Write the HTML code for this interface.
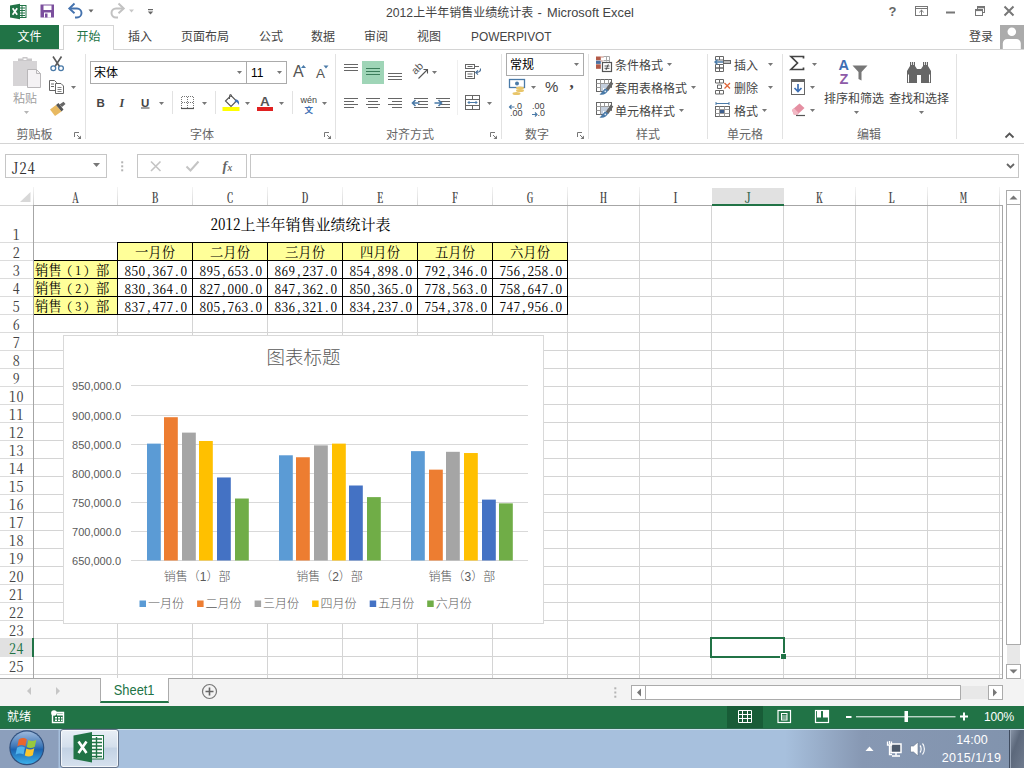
<!DOCTYPE html>
<html lang="zh-CN">
<head>
<meta charset="utf-8">
<title>2012上半年销售业绩统计表 - Microsoft Excel</title>
<style>
*{box-sizing:border-box;margin:0;padding:0}
html,body{width:1024px;height:768px;overflow:hidden;background:#fff}
body{position:relative;font-family:"Liberation Sans","Noto Sans CJK SC",sans-serif;font-size:12px;color:#444}
.abs{position:absolute}
#titlebar{position:absolute;left:0;top:0;width:1024px;height:24px;background:#fff}
#title{position:absolute;left:386px;top:3px;white-space:pre;font-size:12px;color:#444;line-height:20px}
.t1{font-size:12.2px}.t3{font-size:13px;letter-spacing:0.8px}.t4{font-size:12.8px}
#tabs{position:absolute;left:0;top:24px;width:1024px;height:26px;background:#fff;border-bottom:1px solid #d4d4d4}
.tab{position:absolute;top:1px;height:25px;line-height:25px;font-size:12px;color:#444;text-align:center;white-space:nowrap}
#tab-file{left:0;width:59px;top:1px;height:24px;line-height:25px;background:#217346;color:#fff}
#tab-home{left:63px;width:51px;top:1px;height:25px;border:1px solid #d4d4d4;border-bottom:0;background:#fff;color:#217346;line-height:23px}
#ribbon{position:absolute;left:0;top:50px;width:1024px;height:94px;background:#fff;border-bottom:1px solid #d4d4d4}
.glabel{position:absolute;top:75px;font-size:12px;color:#666;white-space:nowrap;transform:translateX(-50%)}
.gsep{position:absolute;top:6px;height:83px;width:1px;background:#e1e1e1}
.rtxt{position:absolute;font-size:12px;line-height:16px;color:#444;white-space:nowrap}
.combo{position:absolute;border:1px solid #ababab;background:#fff;height:23px;font-size:12px;color:#000;line-height:23px;padding-left:3px}
.dd{position:absolute;width:0;height:0;border-left:3px solid transparent;border-right:3px solid transparent;border-top:3px solid #777}
#fbar{position:absolute;left:0;top:144px;width:1024px;height:42px;background:#fff}
.fbox{position:absolute;border:1px solid #c6c6c6;background:#fff;top:10px;height:24px}
#grid{position:absolute;left:0;top:186px;width:1003px;height:493px;background:#fff;overflow:hidden}
.colh{position:absolute;height:15px;font-family:"Noto Serif CJK SC",serif;font-feature-settings:"hwid";font-size:14px;line-height:15px;color:#444;text-align:center}
.rowh{position:absolute;left:0;width:33px;height:18px;font-family:"Noto Serif CJK SC",serif;font-feature-settings:"hwid";font-size:14px;line-height:18px;color:#444;text-align:center;letter-spacing:.4px}
.vl{position:absolute;width:1px;background:#d4d4d4}
.hl{position:absolute;height:1px;background:#d4d4d4}
.cell{position:absolute;height:19px;border:1px solid #000;font-family:"Noto Serif CJK SC",serif;font-feature-settings:"hwid";font-size:14px;color:#000;white-space:nowrap;overflow:hidden}
.hd{background:#ffff99;text-align:center;line-height:17px;font-size:13.3px}
.nm{text-align:left;padding-left:1px}
.nm i{font-style:normal;display:inline-block}
.p1{margin-left:5px;font-size:11.5px}.p2{margin-left:3px;font-size:12px}.p3{margin-left:2.5px;font-size:11.5px}.p4{margin-left:6.5px}
.num{background:#fff;text-align:right;line-height:19px;padding-right:4.5px;font-size:13.3px;letter-spacing:.35px}
#sheetbar{position:absolute;left:0;top:679px;width:1024px;height:27px;background:#f3f3f3}
#status{position:absolute;left:0;top:706px;width:1024px;height:22px;background:#217346;color:#fff}
#taskbar{position:absolute;left:0;top:728px;width:1024px;height:40px;background:#a8c0dc}
</style>
</head>
<body>
<div id="titlebar"><div id="title"><span class="t1">2012</span><span class="t2">上半年销售业绩统计表</span><span class="t3"> - </span><span class="t4">Microsoft Excel</span></div>
<svg class="abs" style="left:0;top:0" width="170" height="24" viewBox="0 0 170 24">
<!-- excel icon -->
<rect x="17" y="5.5" width="9" height="12" fill="#fff" stroke="#217346" stroke-width="1"/>
<path d="M19 8h6M19 10.5h6M19 13h6M19 15.5h6M22 6v11" stroke="#217346" stroke-width="1" fill="none"/>
<path d="M10 5.5L20 3.8V19.2L10 17.5Z" fill="#217346"/>
<path d="M12.6 8.2L17.2 14.8M17.2 8.2L12.6 14.8" stroke="#fff" stroke-width="1.7" fill="none"/>
<!-- save -->
<path d="M40.500 4.500H54V17.500H40.500Z" fill="#7b4f9d"/>
<rect x="43.500" y="5.500" width="8" height="4.500" fill="#fff"/>
<rect x="44" y="12.500" width="7" height="5" fill="#fff"/>
<rect x="45" y="13.500" width="2.500" height="4" fill="#7b4f9d"/>
<!-- undo -->
<path d="M70.5 8.5H77a4.5 4.5 0 0 1 0 9h-2" stroke="#4472ae" stroke-width="1.900" fill="none"/>
<path d="M74.5 3.5L69.3 8.5L74.5 13.2" stroke="#4472ae" stroke-width="1.900" fill="none"/>
<path d="M88.5 9.5h5l-2.5 3z" fill="#666"/>
<!-- redo -->
<path d="M122.5 8.5H116a4.5 4.5 0 0 0 0 9h2" stroke="#c2c2c2" stroke-width="2" fill="none"/>
<path d="M118.5 3.5L123.7 8.5L118.5 13.2" stroke="#c2c2c2" stroke-width="2" fill="none"/>
<path d="M129 9.5h5l-2.5 3z" fill="#c8c8c8"/>
<!-- customize -->
<rect x="148" y="9" width="5" height="1.2" fill="#666"/>
<path d="M147.8 11.5h5.4l-2.7 3z" fill="#666"/>
</svg>
<svg class="abs" style="left:880px;top:0" width="144" height="24" viewBox="880 0 144 24">
<text x="888.5" y="15.5" font-family="Liberation Sans,sans-serif" font-weight="bold" font-size="13" fill="#666">?</text>
<rect x="915.5" y="6.5" width="12" height="9" fill="none" stroke="#777" stroke-width="1"/>
<path d="M915.5 8.5h12" stroke="#777" stroke-width="1"/>
<path d="M921.5 10v5M919.3 12.3L921.5 10.2L923.7 12.3" stroke="#777" stroke-width="1" fill="none"/>
<rect x="946" y="11.5" width="9" height="2" fill="#777"/>
<rect x="977.5" y="6.5" width="7" height="6" fill="none" stroke="#777" stroke-width="1"/>
<path d="M977 7.5h8" stroke="#777" stroke-width="1.6"/>
<rect x="975.5" y="9.5" width="7" height="6" fill="#fff" stroke="#777" stroke-width="1"/>
<path d="M975 10.3h8" stroke="#777" stroke-width="1.6"/>
<path d="M1004.5 6.5L1013.5 15.5M1013.5 6.5L1004.5 15.5" stroke="#777" stroke-width="2"/>
</svg>
</div>
<div id="tabs">
<div class="tab" id="tab-file">文件</div>
<div class="tab" id="tab-home">开始</div>
<div class="tab" style="left:128px">插入</div>
<div class="tab" style="left:181px">页面布局</div>
<div class="tab" style="left:259px">公式</div>
<div class="tab" style="left:311px">数据</div>
<div class="tab" style="left:364px">审阅</div>
<div class="tab" style="left:417px">视图</div>
<div class="tab" style="left:471px;font-size:11.9px">POWERPIVOT</div>
<div class="tab" style="left:969px">登录</div>
<svg class="abs" style="left:1000px;top:1px" width="24" height="24" viewBox="0 0 24 24"><rect width="24" height="24" fill="#ababab"/><circle cx="11.8" cy="6.800" r="4.300" fill="#fff"/><path d="M2.800 24v-5.500a4.500 4.500 0 0 1 4.500-4.500h9a4.500 4.500 0 0 1 4.500 4.500V24z" fill="#fff"/></svg>
</div>
<div id="ribbon">
<svg class="abs" style="left:0;top:0;z-index:3" width="1024" height="93" viewBox="0 50 1024 93">
<rect x="85.0" y="54" width="1" height="85" fill="#e2e2e2"/>
<rect x="335.0" y="54" width="1" height="85" fill="#e2e2e2"/>
<rect x="501.0" y="54" width="1" height="85" fill="#e2e2e2"/>
<rect x="588.0" y="54" width="1" height="85" fill="#e2e2e2"/>
<rect x="707.0" y="54" width="1" height="85" fill="#e2e2e2"/>
<rect x="782.0" y="54" width="1" height="85" fill="#e2e2e2"/>
<rect x="956.0" y="54" width="1" height="85" fill="#e2e2e2"/>
<rect x="172.0" y="91" width="1" height="23" fill="#e2e2e2"/>
<rect x="215.0" y="91" width="1" height="23" fill="#e2e2e2"/>
<rect x="292.0" y="91" width="1" height="23" fill="#e2e2e2"/>
<rect x="457" y="60" width="1" height="55" fill="#efefef"/>
<rect x="13" y="61" width="24" height="25" fill="#d6d4d6"/>
<path d="M18 61v-2.5h4.5v-1.5h5v1.5h4.5V61z" fill="#c9c7c9"/><rect x="23.5" y="58.5" width="3" height="1.5" fill="#fff"/>
<path d="M27.5 69.5h9l4 4V87.5h-13z" fill="#f4f2f4" stroke="#b9b7b9"/><path d="M36.5 69.5v4h4" fill="none" stroke="#b9b7b9"/>
<path d="M24.0 111h5l-2.5 3z" fill="#b5b5b5"/>
<path d="M53 56.5L59.5 66.5M61.5 56.5L55 66.5" stroke="#5a5a5a" stroke-width="1.6" fill="none"/>
<circle cx="53.3" cy="68.3" r="2.4" fill="none" stroke="#4a7aa8" stroke-width="1.3"/><circle cx="61" cy="68.3" r="2.4" fill="none" stroke="#4a7aa8" stroke-width="1.3"/>
<path d="M49.5 80.5h5l2 2v8h-7z" fill="#fff" stroke="#666"/><path d="M51 84h3M51 86.5h3" stroke="#666"/>
<path d="M55.5 83.5h5.5l2.500 2.500V93.500h-8z" fill="#fff" stroke="#666"/><path d="M57.500 87.500h4M57.500 89.500h4M57.500 91.500h4" stroke="#777" stroke-width="0.9"/>
<path d="M71.0 86h5l-2.5 3z" fill="#777"/>
<path d="M50 109.500L56 105l5.500 6.500L55 116z" fill="#e8b961"/>
<path d="M56 105l2.500-2L63.500 109.500l-2 2z" fill="#555"/>
<path d="M59.500 104.500l4-2.800 2 2.300-3.500 3z" fill="#666"/>
<path d="M74.5 137V132.5H79" stroke="#777" fill="none"/><path d="M77 135L80.5 138.5" stroke="#777" fill="none"/><path d="M81 135.5V139H77.5z" fill="#777"/>
<path d="M237.0 71h5l-2.5 3z" fill="#777"/>
<path d="M277.0 71h5l-2.5 3z" fill="#777"/>
<path d="M159.0 102h5l-2.5 3z" fill="#777"/>
<path d="M202.0 102h5l-2.5 3z" fill="#777"/>
<path d="M245.0 102h5l-2.5 3z" fill="#777"/>
<path d="M279.0 102h5l-2.5 3z" fill="#777"/>
<path d="M322.0 102h5l-2.5 3z" fill="#777"/>
<rect x="141" y="107.500" width="8.500" height="1" fill="#444"/>
<path d="M181.500 96.500h12M181.500 102.500h12M181.500 96.500v11M187.500 96.500v11M193.500 96.500v11" stroke="#777" stroke-dasharray="1 1" fill="none" shape-rendering="crispEdges"/><path d="M181 108.500h13" stroke="#555" stroke-width="1.2"/>
<rect x="222.500" y="107" width="17" height="4" fill="#ffff00"/>
<path d="M225.500 101l5.500-5.500 5.500 5.500-5.500 5.500z" fill="#fff" stroke="#555" stroke-width="1.100"/>
<path d="M229.500 99v-3.500a1 1 0 0 1 2 0V97" fill="none" stroke="#555" stroke-width="1"/>
<path d="M235.500 99.500c2.500 0 4 1.500 3.500 5.500-1.500-2.500-2-3-4.500-3.500z" fill="#3d6fb4"/>
<rect x="257" y="107" width="16" height="4" fill="#e02020"/>
<path d="M301 68l2.500-3 2.500 3z" fill="#4a7aa8"/><path d="M323.500 65.500h5l-2.500 3z" fill="#4a7aa8"/>
<path d="M324.5 137V132.5H329" stroke="#777" fill="none"/><path d="M327 135L330.5 138.5" stroke="#777" fill="none"/><path d="M331 135.5V139H327.5z" fill="#777"/>
<rect x="362" y="61" width="22" height="23" fill="#9fd5b7"/>
<rect x="344" y="64.0" width="14" height="1" fill="#666"/><rect x="344" y="67.0" width="14" height="1" fill="#666"/><rect x="344" y="70.0" width="14" height="1" fill="#666"/>
<rect x="366" y="68.0" width="14" height="1" fill="#3b7d5a"/><rect x="366" y="71.0" width="14" height="1" fill="#3b7d5a"/><rect x="366" y="74.0" width="14" height="1" fill="#3b7d5a"/>
<rect x="388" y="73.0" width="14" height="1" fill="#666"/><rect x="388" y="76.0" width="14" height="1" fill="#666"/><rect x="388" y="79.0" width="14" height="1" fill="#666"/>
<rect x="344" y="98.0" width="14" height="1" fill="#666"/><rect x="344" y="101.0" width="10" height="1" fill="#666"/><rect x="344" y="104.0" width="14" height="1" fill="#666"/><rect x="344" y="107.0" width="10" height="1" fill="#666"/>
<rect x="366" y="98.0" width="14" height="1" fill="#666"/><rect x="368" y="101.0" width="10" height="1" fill="#666"/><rect x="366" y="104.0" width="14" height="1" fill="#666"/><rect x="368" y="107.0" width="10" height="1" fill="#666"/>
<rect x="388" y="98.0" width="14" height="1" fill="#666"/><rect x="392" y="101.0" width="10" height="1" fill="#666"/><rect x="388" y="104.0" width="14" height="1" fill="#666"/><rect x="392" y="107.0" width="10" height="1" fill="#666"/>
<text x="0" y="0" transform="translate(415.500,75) rotate(-45)" font-family="Liberation Sans,sans-serif" font-size="10.500" fill="#555">ab</text>
<path d="M418.500 78.500L427 70M423.500 69.500h4v4" stroke="#555" stroke-width="1.100" fill="none"/>
<path d="M432.0 71h5l-2.5 3z" fill="#777"/>
<rect x="414" y="98.0" width="14" height="1" fill="#666"/><rect x="418" y="101.0" width="10" height="1" fill="#666"/><rect x="418" y="104.0" width="10" height="1" fill="#666"/><rect x="414" y="107.0" width="14" height="1" fill="#666"/>
<path d="M412.500 103h7M415.500 100l-3 3 3 3" stroke="#4a7aa8" stroke-width="1.600" fill="none"/>
<rect x="436" y="98.0" width="14" height="1" fill="#666"/><rect x="440" y="101.0" width="10" height="1" fill="#666"/><rect x="440" y="104.0" width="10" height="1" fill="#666"/><rect x="436" y="107.0" width="14" height="1" fill="#666"/>
<path d="M434.500 103h7M438.500 100l3 3-3 3" stroke="#4a7aa8" stroke-width="1.600" fill="none"/>
<rect x="465.500" y="64.500" width="9" height="4" fill="#fff" stroke="#666"/><path d="M467.500 66.500h5M474.500 66.500h4.500" stroke="#666"/>
<rect x="465.500" y="71.500" width="9" height="7" fill="#fff" stroke="#666"/><path d="M467.500 74h5M467.500 76.500h5" stroke="#666"/>
<path d="M480.500 68.500c0.500 3-2 4-4.500 4M478 70.300l-2.300 2.200 2.300 2.200" stroke="#4a6f96" stroke-width="1.100" fill="none"/>
<rect x="465.500" y="95.500" width="14" height="14" fill="#fff" stroke="#666"/><path d="M465.500 99.500h14M465.500 105.500h14M472.500 95.500v4M472.500 105.500v4" stroke="#666"/><path d="M468 102.500h9M469.500 101l-1.500 1.500 1.500 1.500M475.500 101l1.500 1.500-1.500 1.500" stroke="#4a7aa8" fill="none" stroke-width="1"/>
<path d="M487.0 102h5l-2.5 3z" fill="#777"/>
<path d="M490.5 137V132.5H495" stroke="#777" fill="none"/><path d="M493 135L496.5 138.5" stroke="#777" fill="none"/><path d="M497 135.5V139H493.5z" fill="#777"/>
<path d="M574.0 63h5l-2.5 3z" fill="#777"/>
<path d="M531.0 86h5l-2.5 3z" fill="#777"/>
<path d="M577.5 137V132.5H582" stroke="#777" fill="none"/><path d="M580 135L583.5 138.5" stroke="#777" fill="none"/><path d="M584 135.5V139H580.5z" fill="#777"/>
<rect x="509.500" y="79.500" width="15" height="8" fill="#fff" stroke="#4a7aa8" stroke-width="1.300"/><circle cx="517" cy="83.500" r="2" fill="#4a7aa8"/>
<ellipse cx="520" cy="88" rx="4" ry="1.500" fill="#e8c56a"/><ellipse cx="520" cy="90.500" rx="4" ry="1.500" fill="#e8c56a"/><ellipse cx="516.500" cy="93.500" rx="4" ry="1.500" fill="#e8c56a"/>
<path d="M509.500 107h5M511.500 105l-2 2 2 2" stroke="#4a7aa8" stroke-width="1.200" fill="none"/>
<path d="M532 114.500h5M535 112.500l2 2-2 2" stroke="#4a7aa8" stroke-width="1.200" fill="none"/>
<rect x="596" y="56.500" width="4.800" height="3.800" fill="#b25a48"/><rect x="596" y="60.700" width="4.800" height="3.200" fill="#4a6fa0"/><rect x="596" y="64.300" width="4.800" height="4.500" fill="#b25a48"/>
<path d="M600.800 57h3M600.800 61h2" stroke="#c98a7d" stroke-width="1"/>
<path d="M603.500 56.500h6v6M606.500 56.500v5M603.500 60.500h6" stroke="#aaa" fill="none"/>
<rect x="602.500" y="62.500" width="9" height="9" fill="#fff" stroke="#555" stroke-width="1.200"/><path d="M604.500 66h5M604.500 68.300h5M608.300 64.300l-2.300 5.700" stroke="#444" stroke-width="0.900"/>
<rect x="596.500" y="79.5" width="15" height="12" fill="#fff" stroke="#666"/>
<path d="M596.500 83.5h15M596.500 87.5h15M600.500 79.5v12M604.500 79.5v12M608.500 79.5v4" stroke="#999" fill="none"/>
<rect x="601" y="84" width="7" height="7" fill="#c3cedd"/>
<rect x="603" y="88" width="10" height="5" fill="#fff"/>
<path d="M612 82.5L607 90" stroke="#666" stroke-width="3.200" fill="none"/>
<path d="M608.300 90.3L605 88.3C602.500 91 601.500 93 599.500 94.5C603.500 95.5 607 93.5 608.300 90.3z" fill="#4a7aa8"/>
<circle cx="605.300" cy="91.3" r="0.900" fill="#dfe8f2"/>
<rect x="596.500" y="102.5" width="15" height="12" fill="#fff" stroke="#666"/>
<path d="M596.500 106.5h15M596.500 110.5h15M600.500 102.5v12M604.500 102.5v12M608.500 102.5v4" stroke="#999" fill="none"/>
<rect x="601" y="107" width="7" height="7" fill="#c3cedd"/>
<rect x="603" y="111" width="10" height="5" fill="#fff"/>
<path d="M612 105.5L607 113" stroke="#666" stroke-width="3.200" fill="none"/>
<path d="M608.300 113.3L605 111.3C602.500 114 601.500 116 599.500 117.5C603.500 118.5 607 116.5 608.300 113.3z" fill="#4a7aa8"/>
<circle cx="605.300" cy="114.3" r="0.900" fill="#dfe8f2"/>
<path d="M667.0 63h5l-2.5 3z" fill="#777"/>
<path d="M691.0 86h5l-2.5 3z" fill="#777"/>
<path d="M679.0 109h5l-2.5 3z" fill="#777"/>
<path d="M715.500 56.500h4v3.500h-4zM719.500 56.500h4v3.500h-4zM715.500 64.500h4v3.500h-4zM719.500 64.500h4v3.500h-4zM715.500 68h4v3.500h-4zM719.500 68h4v3.500h-4z" fill="#fff" stroke="#666"/>
<rect x="723.500" y="60.500" width="7" height="3" fill="#bbb" stroke="#666"/><path d="M715 62h8M717.500 59.500l-2.500 2.500 2.500 2.500" stroke="#4a7aa8" stroke-width="1.400" fill="none"/>
<path d="M715.500 79.500h4v3.500h-4zM719.500 79.500h4v3.500h-4zM717.500 85h4v3.500h-4zM715.500 90.500h4v3.500h-4zM719.500 90.500h4v3.500h-4z" fill="#fff" stroke="#666"/>
<path d="M724.500 83l5.500 5.500M730 83l-5.500 5.500" stroke="#e0663a" stroke-width="1.300"/>
<path d="M716 103.500h13M716 102v3M729 102v3" stroke="#4a7aa8" fill="none"/>
<rect x="715.500" y="106.500" width="14" height="10" fill="#fff" stroke="#666"/><path d="M715.500 109.500h14M715.500 113.500h14M719.500 106.500v10M724.500 106.500v10" stroke="#999"/><rect x="720" y="110" width="4" height="3" fill="#3d5f8f"/>
<path d="M768.0 63h5l-2.5 3z" fill="#777"/>
<path d="M768.0 86h5l-2.5 3z" fill="#777"/>
<path d="M762.0 109h5l-2.5 3z" fill="#777"/>
<path d="M803.500 58.500v-2h-12.500l6.500 6.500-6.500 6.500h12.500v-2" fill="none" stroke="#444" stroke-width="1.700"/>
<path d="M812.0 63h5l-2.5 3z" fill="#777"/>
<path d="M810.0 86h5l-2.5 3z" fill="#777"/>
<path d="M810.0 109h5l-2.5 3z" fill="#777"/>
<rect x="791.500" y="79.500" width="13" height="15" fill="#fff" stroke="#666"/><rect x="791" y="79" width="14" height="3" fill="#666"/><path d="M798 84v7.500M794.500 88l3.500 3.500 3.500-3.500" stroke="#3d6fb4" stroke-width="1.700" fill="none"/>
<path d="M792 110l7.500-6.500 5 4.500-7.500 7h-3z" fill="#e58fa2"/><path d="M792 110l2-1.800 4.500 4.500-1.500 2.300h-3z" fill="#f2b8c4"/><path d="M796 115.500h9" stroke="#555" stroke-width="1.200"/>
<path d="M852.500 65.500h15l-6 6.500v8.500l-3-1.500v-7z" fill="#777"/>
<path d="M854.0 111h5l-2.5 3z" fill="#777"/>
<path d="M919.0 111h5l-2.5 3z" fill="#777"/>
<path d="M907 83V71l3-5v-4h5v4l2 3v14zM931 83V71l-3-5v-4h-5v4l-2 3v14z" fill="#666"/><rect x="916" y="69" width="6" height="6" fill="#666"/><path d="M908.500 82.500v-8M929.500 82.500v-8" stroke="#fff" stroke-width="1"/><path d="M911.500 62v3M913.500 62v3M924.500 62v3M926.500 62v3" stroke="#fff" stroke-width="0.800"/>
<path d="M1005.500 137.500l4-4 4 4" fill="none" stroke="#555" stroke-width="1.800"/>
</svg>
<div class="rtxt" style="left:13px;top:40.5px;color:#a0a0a0">粘贴</div>
<div class="glabel" style="left:34.5px">剪贴板</div>
<div class="glabel" style="left:202px">字体</div>
<div class="glabel" style="left:410px">对齐方式</div>
<div class="glabel" style="left:537px">数字</div>
<div class="glabel" style="left:648px">样式</div>
<div class="glabel" style="left:745px">单元格</div>
<div class="glabel" style="left:869px">编辑</div>
<div class="combo" style="left:90px;top:11px;width:157px">宋体</div>
<div class="combo" style="left:246px;top:11px;width:41px;padding-left:4px;font-family:'Liberation Sans',sans-serif">11</div>
<div class="combo" style="left:506px;top:3px;width:78px;height:23px;line-height:23px">常规</div>
<div class="rtxt" style="left:96.5px;top:44.5px;font-weight:bold;font-size:11.5px;font-family:'Liberation Sans',sans-serif">B</div>
<div class="rtxt" style="left:119.5px;top:44.5px;font-style:italic;font-weight:bold;font-size:12px;font-family:'Liberation Serif',serif">I</div>
<div class="rtxt" style="left:141px;top:44.5px;font-size:11.5px;font-weight:bold;font-family:'Liberation Sans',sans-serif">U</div>
<div class="rtxt" style="left:293px;top:14px;font-size:16px;font-family:'Liberation Sans',sans-serif;color:#555">A</div>
<div class="rtxt" style="left:316px;top:16px;font-size:13.5px;font-family:'Liberation Sans',sans-serif;color:#555">A</div>
<div class="rtxt" style="left:260px;top:43.5px;font-size:13.5px;font-weight:bold;font-family:'Liberation Sans',sans-serif;color:#555">A</div>
<div class="rtxt" style="left:300.5px;top:41.5px;font-size:9px;font-family:'Liberation Sans',sans-serif;color:#444">wén</div>
<div class="rtxt" style="left:304.5px;top:51.5px;font-size:8.500px;color:#3d6fb4;font-weight:bold">文</div>
<div class="rtxt" style="left:545px;top:29px;font-size:15px;font-family:'Liberation Sans',sans-serif;color:#444">%</div>
<div class="rtxt" style="left:569.5px;top:24.5px;font-size:17px;font-weight:bold;font-family:'Liberation Serif',serif;color:#444">,</div>
<div class="rtxt" style="left:514.5px;top:51.5px;font-size:9px;font-family:'Liberation Sans',sans-serif;line-height:8px">.0</div>
<div class="rtxt" style="left:510px;top:59px;font-size:9px;font-family:'Liberation Sans',sans-serif;line-height:8px">.00</div>
<div class="rtxt" style="left:532px;top:51.5px;font-size:9px;font-family:'Liberation Sans',sans-serif;line-height:8px">.00</div>
<div class="rtxt" style="left:537.5px;top:59px;font-size:9px;font-family:'Liberation Sans',sans-serif;line-height:8px">.0</div>
<div class="rtxt" style="left:615px;top:7.5px;">条件格式</div>
<div class="rtxt" style="left:615px;top:30.5px;">套用表格格式</div>
<div class="rtxt" style="left:615px;top:53.5px;">单元格样式</div>
<div class="rtxt" style="left:734px;top:7.5px;">插入</div>
<div class="rtxt" style="left:734px;top:30.5px;">删除</div>
<div class="rtxt" style="left:734px;top:53.5px;">格式</div>
<div class="rtxt" style="left:824px;top:40.5px;">排序和筛选</div>
<div class="rtxt" style="left:889px;top:40.5px;">查找和选择</div>
<div class="rtxt" style="left:838.5px;top:7.5px;font-weight:bold;font-size:14.5px;font-family:'Liberation Sans',sans-serif;color:#3d6fb4;line-height:14px">A</div>
<div class="rtxt" style="left:839.5px;top:21.5px;font-weight:bold;font-size:14.5px;font-family:'Liberation Sans',sans-serif;color:#8e5ba8;line-height:14px">Z</div>
</div>
<div id="fbar">
<div class="fbox" style="left:5px;width:102px;letter-spacing:.8px;font-family:'Noto Serif CJK SC',serif;font-feature-settings:'hwid';font-size:15px;line-height:25px;padding-left:5px;color:#333">J24</div>
<div class="fbox" style="left:137px;width:110px"></div>
<div class="fbox" style="left:250px;width:769px"></div>
<svg class="abs" style="left:0;top:0" width="1024" height="42" viewBox="0 144 1024 42">
<path d="M93 163h7l-3.500 4z" fill="#777"/>
<rect x="121.200" y="161.300" width="2" height="2" fill="#b4b4b4"/><rect x="121.200" y="165.300" width="2" height="2" fill="#b4b4b4"/><rect x="121.200" y="169.300" width="2" height="2" fill="#b4b4b4"/>
<path d="M151 161.500l9.500 9.500M160.500 161.500l-9.500 9.500" stroke="#c4c4c4" stroke-width="1.600"/>
<path d="M186.500 166.500l4 4 8-9" stroke="#c4c4c4" stroke-width="2" fill="none"/>
<text x="222.500" y="171" font-family="Liberation Serif,serif" font-style="italic" font-weight="bold" font-size="14" fill="#666">f</text><text x="227.500" y="171" font-family="Liberation Serif,serif" font-style="italic" font-weight="bold" font-size="9.500" fill="#666">x</text>
<path d="M1007 164l3.500 3.500 3.500-3.500" stroke="#666" stroke-width="1.800" fill="none"/>
</svg>
</div>
<div id="grid">
<div class="vl" style="left:117px;top:1px;height:18px;background:linear-gradient(180deg,#f4f4f4,#d8d8d8)"></div>
<div class="vl" style="left:192px;top:1px;height:18px;background:linear-gradient(180deg,#f4f4f4,#d8d8d8)"></div>
<div class="vl" style="left:267px;top:1px;height:18px;background:linear-gradient(180deg,#f4f4f4,#d8d8d8)"></div>
<div class="vl" style="left:342px;top:1px;height:18px;background:linear-gradient(180deg,#f4f4f4,#d8d8d8)"></div>
<div class="vl" style="left:417px;top:1px;height:18px;background:linear-gradient(180deg,#f4f4f4,#d8d8d8)"></div>
<div class="vl" style="left:492px;top:1px;height:18px;background:linear-gradient(180deg,#f4f4f4,#d8d8d8)"></div>
<div class="vl" style="left:567px;top:1px;height:18px;background:linear-gradient(180deg,#f4f4f4,#d8d8d8)"></div>
<div class="vl" style="left:639px;top:1px;height:18px;background:linear-gradient(180deg,#f4f4f4,#d8d8d8)"></div>
<div class="vl" style="left:855px;top:1px;height:18px;background:linear-gradient(180deg,#f4f4f4,#d8d8d8)"></div>
<div class="vl" style="left:927px;top:1px;height:18px;background:linear-gradient(180deg,#f4f4f4,#d8d8d8)"></div>
<div class="vl" style="left:999px;top:1px;height:18px;background:linear-gradient(180deg,#f4f4f4,#d8d8d8)"></div>
<div class="vl" style="left:33px;top:1px;height:18px;background:linear-gradient(180deg,#f4f4f4,#d0d0d0)"></div>
<svg class="abs" style="left:18px;top:4px" width="14" height="14" viewBox="18 190 14 14"><path d="M30.500 192v10H20z" fill="#d8d8d8"/></svg>
<div class="hl" style="left:34px;top:56px;width:968px"></div>
<div class="hl" style="left:0;top:56px;width:33px;background:#dcdcdc"></div>
<div class="hl" style="left:34px;top:74px;width:968px"></div>
<div class="hl" style="left:0;top:74px;width:33px;background:#dcdcdc"></div>
<div class="hl" style="left:34px;top:92px;width:968px"></div>
<div class="hl" style="left:0;top:92px;width:33px;background:#dcdcdc"></div>
<div class="hl" style="left:34px;top:110px;width:968px"></div>
<div class="hl" style="left:0;top:110px;width:33px;background:#dcdcdc"></div>
<div class="hl" style="left:34px;top:128px;width:968px"></div>
<div class="hl" style="left:0;top:128px;width:33px;background:#dcdcdc"></div>
<div class="hl" style="left:34px;top:146px;width:968px"></div>
<div class="hl" style="left:0;top:146px;width:33px;background:#dcdcdc"></div>
<div class="hl" style="left:34px;top:164px;width:968px"></div>
<div class="hl" style="left:0;top:164px;width:33px;background:#dcdcdc"></div>
<div class="hl" style="left:34px;top:182px;width:968px"></div>
<div class="hl" style="left:0;top:182px;width:33px;background:#dcdcdc"></div>
<div class="hl" style="left:34px;top:200px;width:968px"></div>
<div class="hl" style="left:0;top:200px;width:33px;background:#dcdcdc"></div>
<div class="hl" style="left:34px;top:218px;width:968px"></div>
<div class="hl" style="left:0;top:218px;width:33px;background:#dcdcdc"></div>
<div class="hl" style="left:34px;top:236px;width:968px"></div>
<div class="hl" style="left:0;top:236px;width:33px;background:#dcdcdc"></div>
<div class="hl" style="left:34px;top:254px;width:968px"></div>
<div class="hl" style="left:0;top:254px;width:33px;background:#dcdcdc"></div>
<div class="hl" style="left:34px;top:272px;width:968px"></div>
<div class="hl" style="left:0;top:272px;width:33px;background:#dcdcdc"></div>
<div class="hl" style="left:34px;top:290px;width:968px"></div>
<div class="hl" style="left:0;top:290px;width:33px;background:#dcdcdc"></div>
<div class="hl" style="left:34px;top:308px;width:968px"></div>
<div class="hl" style="left:0;top:308px;width:33px;background:#dcdcdc"></div>
<div class="hl" style="left:34px;top:326px;width:968px"></div>
<div class="hl" style="left:0;top:326px;width:33px;background:#dcdcdc"></div>
<div class="hl" style="left:34px;top:344px;width:968px"></div>
<div class="hl" style="left:0;top:344px;width:33px;background:#dcdcdc"></div>
<div class="hl" style="left:34px;top:362px;width:968px"></div>
<div class="hl" style="left:0;top:362px;width:33px;background:#dcdcdc"></div>
<div class="hl" style="left:34px;top:380px;width:968px"></div>
<div class="hl" style="left:0;top:380px;width:33px;background:#dcdcdc"></div>
<div class="hl" style="left:34px;top:398px;width:968px"></div>
<div class="hl" style="left:0;top:398px;width:33px;background:#dcdcdc"></div>
<div class="hl" style="left:34px;top:416px;width:968px"></div>
<div class="hl" style="left:0;top:416px;width:33px;background:#dcdcdc"></div>
<div class="hl" style="left:34px;top:434px;width:968px"></div>
<div class="hl" style="left:0;top:434px;width:33px;background:#dcdcdc"></div>
<div class="hl" style="left:34px;top:452px;width:968px"></div>
<div class="hl" style="left:0;top:452px;width:33px;background:#dcdcdc"></div>
<div class="hl" style="left:34px;top:470px;width:968px"></div>
<div class="hl" style="left:0;top:470px;width:33px;background:#dcdcdc"></div>
<div class="hl" style="left:34px;top:488px;width:968px"></div>
<div class="hl" style="left:0;top:488px;width:33px;background:#dcdcdc"></div>
<div class="vl" style="left:117px;top:20px;height:472px"></div>
<div class="vl" style="left:192px;top:20px;height:472px"></div>
<div class="vl" style="left:267px;top:20px;height:472px"></div>
<div class="vl" style="left:342px;top:20px;height:472px"></div>
<div class="vl" style="left:417px;top:20px;height:472px"></div>
<div class="vl" style="left:492px;top:20px;height:472px"></div>
<div class="vl" style="left:567px;top:20px;height:472px"></div>
<div class="vl" style="left:639px;top:20px;height:472px"></div>
<div class="vl" style="left:711px;top:20px;height:472px"></div>
<div class="vl" style="left:783px;top:20px;height:472px"></div>
<div class="vl" style="left:855px;top:20px;height:472px"></div>
<div class="vl" style="left:927px;top:20px;height:472px"></div>
<div class="vl" style="left:999px;top:20px;height:472px"></div>
<div class="hl" style="left:0;top:19px;width:33px;background:#d4d4d4"></div>
<div class="hl" style="left:33px;top:19px;width:970px;background:#a6a6a6"></div>
<div class="vl" style="left:33px;top:19px;height:474px;background:#a6a6a6"></div>
<div class="vl" style="left:1002px;top:19px;height:474px;background:#a6a6a6"></div>
<div class="hl" style="left:0px;top:492px;width:1003px;background:#a6a6a6"></div>
<div class="colh" style="left:34px;width:83px;top:4px;">A</div>
<div class="colh" style="left:118px;width:74px;top:4px;">B</div>
<div class="colh" style="left:193px;width:74px;top:4px;">C</div>
<div class="colh" style="left:268px;width:74px;top:4px;">D</div>
<div class="colh" style="left:343px;width:74px;top:4px;">E</div>
<div class="colh" style="left:418px;width:74px;top:4px;">F</div>
<div class="colh" style="left:493px;width:74px;top:4px;">G</div>
<div class="colh" style="left:568px;width:71px;top:4px;">H</div>
<div class="colh" style="left:640px;width:71px;top:4px;">I</div>
<div class="abs" style="left:712px;top:2px;width:72px;height:18px;background:#e1e1e1;border-bottom:2px solid #217346"></div>
<div class="colh" style="left:712px;width:71px;top:4px;color:#2b6048;">J</div>
<div class="colh" style="left:784px;width:71px;top:4px;">K</div>
<div class="colh" style="left:856px;width:71px;top:4px;">L</div>
<div class="colh" style="left:928px;width:71px;top:4px;">M</div>
<div class="rowh" style="top:20px;height:36px;line-height:57px">1</div>
<div class="rowh" style="top:57px;height:17px;line-height:19px">2</div>
<div class="rowh" style="top:75px;height:17px;line-height:19px">3</div>
<div class="rowh" style="top:93px;height:17px;line-height:19px">4</div>
<div class="rowh" style="top:111px;height:17px;line-height:19px">5</div>
<div class="rowh" style="top:129px;height:17px;line-height:19px">6</div>
<div class="rowh" style="top:147px;height:17px;line-height:19px">7</div>
<div class="rowh" style="top:165px;height:17px;line-height:19px">8</div>
<div class="rowh" style="top:183px;height:17px;line-height:19px">9</div>
<div class="rowh" style="top:201px;height:17px;line-height:19px">10</div>
<div class="rowh" style="top:219px;height:17px;line-height:19px">11</div>
<div class="rowh" style="top:237px;height:17px;line-height:19px">12</div>
<div class="rowh" style="top:255px;height:17px;line-height:19px">13</div>
<div class="rowh" style="top:273px;height:17px;line-height:19px">14</div>
<div class="rowh" style="top:291px;height:17px;line-height:19px">15</div>
<div class="rowh" style="top:309px;height:17px;line-height:19px">16</div>
<div class="rowh" style="top:327px;height:17px;line-height:19px">17</div>
<div class="rowh" style="top:345px;height:17px;line-height:19px">18</div>
<div class="rowh" style="top:363px;height:17px;line-height:19px">19</div>
<div class="rowh" style="top:381px;height:17px;line-height:19px">20</div>
<div class="rowh" style="top:399px;height:17px;line-height:19px">21</div>
<div class="rowh" style="top:417px;height:17px;line-height:19px">22</div>
<div class="rowh" style="top:435px;height:17px;line-height:19px">23</div>
<div class="abs" style="left:0;top:452px;width:34px;height:19px;background:#e1e1e1;border-right:2px solid #217346"></div>
<div class="rowh" style="top:453px;height:17px;line-height:19px;color:#217346">24</div>
<div class="rowh" style="top:471px;height:17px;line-height:19px">25</div>
<div class="abs" style="left:34px;top:20px;width:533px;height:36px;background:#fff;text-align:center;font-family:'Noto Serif CJK SC',serif;font-feature-settings:'hwid';font-size:15px;color:#000;line-height:36px;white-space:nowrap"><span class="ttl">2012上半年销售业绩统计表</span></div>
<div class="cell hd" style="left:117px;top:56px;width:76px">一月份</div>
<div class="cell hd" style="left:192px;top:56px;width:76px">二月份</div>
<div class="cell hd" style="left:267px;top:56px;width:76px">三月份</div>
<div class="cell hd" style="left:342px;top:56px;width:76px">四月份</div>
<div class="cell hd" style="left:417px;top:56px;width:76px">五月份</div>
<div class="cell hd" style="left:492px;top:56px;width:76px">六月份</div>
<div class="cell hd nm" style="left:34px;top:74px;width:84px;height:19px;border-left:0;border-right:0">销售<i class="p1">（</i><i class="p2">1</i><i class="p3">）</i><i class="p4">部</i></div>
<div class="cell num" style="left:117px;top:74px;width:76px">850,367.0</div>
<div class="cell num" style="left:192px;top:74px;width:76px">895,653.0</div>
<div class="cell num" style="left:267px;top:74px;width:76px">869,237.0</div>
<div class="cell num" style="left:342px;top:74px;width:76px">854,898.0</div>
<div class="cell num" style="left:417px;top:74px;width:76px">792,346.0</div>
<div class="cell num" style="left:492px;top:74px;width:76px">756,258.0</div>
<div class="cell hd nm" style="left:34px;top:92px;width:84px;height:19px;border-left:0;border-right:0">销售<i class="p1">（</i><i class="p2">2</i><i class="p3">）</i><i class="p4">部</i></div>
<div class="cell num" style="left:117px;top:92px;width:76px">830,364.0</div>
<div class="cell num" style="left:192px;top:92px;width:76px">827,000.0</div>
<div class="cell num" style="left:267px;top:92px;width:76px">847,362.0</div>
<div class="cell num" style="left:342px;top:92px;width:76px">850,365.0</div>
<div class="cell num" style="left:417px;top:92px;width:76px">778,563.0</div>
<div class="cell num" style="left:492px;top:92px;width:76px">758,647.0</div>
<div class="cell hd nm" style="left:34px;top:110px;width:84px;height:19px;border-left:0;border-right:0">销售<i class="p1">（</i><i class="p2">3</i><i class="p3">）</i><i class="p4">部</i></div>
<div class="cell num" style="left:117px;top:110px;width:76px">837,477.0</div>
<div class="cell num" style="left:192px;top:110px;width:76px">805,763.0</div>
<div class="cell num" style="left:267px;top:110px;width:76px">836,321.0</div>
<div class="cell num" style="left:342px;top:110px;width:76px">834,237.0</div>
<div class="cell num" style="left:417px;top:110px;width:76px">754,378.0</div>
<div class="cell num" style="left:492px;top:110px;width:76px">747,956.0</div>
<div class="abs" id="chart" style="left:63px;top:149px;width:481px;height:289px;background:#fff;border:1px solid #d9d9d9">
<svg class="abs" style="left:-1px;top:-1px" width="481" height="289" viewBox="63 335 481 289" font-family="Liberation Sans,Noto Sans CJK SC,sans-serif" font-weight="300">
<path d="M131 385.5H528" stroke="#d9d9d9" stroke-width="1"/>
<text x="121" y="389.5" font-size="11" fill="#595959" text-anchor="end">950,000.0</text>
<path d="M131 415.5H528" stroke="#d9d9d9" stroke-width="1"/>
<text x="121" y="419.5" font-size="11" fill="#595959" text-anchor="end">900,000.0</text>
<path d="M131 444.5H528" stroke="#d9d9d9" stroke-width="1"/>
<text x="121" y="448.5" font-size="11" fill="#595959" text-anchor="end">850,000.0</text>
<path d="M131 473.5H528" stroke="#d9d9d9" stroke-width="1"/>
<text x="121" y="477.5" font-size="11" fill="#595959" text-anchor="end">800,000.0</text>
<path d="M131 502.5H528" stroke="#d9d9d9" stroke-width="1"/>
<text x="121" y="506.5" font-size="11" fill="#595959" text-anchor="end">750,000.0</text>
<path d="M131 531.5H528" stroke="#d9d9d9" stroke-width="1"/>
<text x="121" y="535.5" font-size="11" fill="#595959" text-anchor="end">700,000.0</text>
<path d="M131 560.5H528" stroke="#d9d9d9" stroke-width="1"/>
<text x="121" y="564.5" font-size="11" fill="#595959" text-anchor="end">650,000.0</text>
<rect x="147.00" y="443.62" width="13.80" height="116.88" fill="#5b9bd5"/>
<rect x="164.00" y="417.20" width="13.80" height="143.30" fill="#ed7d31"/>
<rect x="182.00" y="432.61" width="13.80" height="127.89" fill="#a5a5a5"/>
<rect x="199.00" y="440.98" width="13.80" height="119.52" fill="#ffc000"/>
<rect x="217.00" y="477.46" width="13.80" height="83.04" fill="#4472c4"/>
<rect x="235.00" y="498.52" width="13.80" height="61.98" fill="#70ad47"/>
<text x="197.2" y="581" font-size="12" fill="#595959" text-anchor="middle">销售（1）部</text>
<rect x="279.00" y="455.29" width="13.80" height="105.21" fill="#5b9bd5"/>
<rect x="296.00" y="457.25" width="13.80" height="103.25" fill="#ed7d31"/>
<rect x="314.00" y="445.37" width="13.80" height="115.13" fill="#a5a5a5"/>
<rect x="332.00" y="443.62" width="13.80" height="116.88" fill="#ffc000"/>
<rect x="349.00" y="485.50" width="13.80" height="75.00" fill="#4472c4"/>
<rect x="367.00" y="497.12" width="13.80" height="63.38" fill="#70ad47"/>
<text x="329.5" y="581" font-size="12" fill="#595959" text-anchor="middle">销售（2）部</text>
<rect x="411.00" y="451.14" width="13.80" height="109.36" fill="#5b9bd5"/>
<rect x="429.00" y="469.64" width="13.80" height="90.86" fill="#ed7d31"/>
<rect x="446.00" y="451.81" width="13.80" height="108.69" fill="#a5a5a5"/>
<rect x="464.00" y="453.03" width="13.80" height="107.47" fill="#ffc000"/>
<rect x="482.00" y="499.61" width="13.80" height="60.89" fill="#4472c4"/>
<rect x="499.00" y="503.36" width="13.80" height="57.14" fill="#70ad47"/>
<text x="461.8" y="581" font-size="12" fill="#595959" text-anchor="middle">销售（3）部</text>
<text x="303.5" y="364" font-size="18.5" fill="#595959" text-anchor="middle">图表标题</text>
<rect x="139.5" y="600.5" width="6.500" height="6.500" fill="#5b9bd5"/>
<text x="148.0" y="608" font-size="12" fill="#595959">一月份</text>
<rect x="197.1" y="600.5" width="6.500" height="6.500" fill="#ed7d31"/>
<text x="205.6" y="608" font-size="12" fill="#595959">二月份</text>
<rect x="254.6" y="600.5" width="6.500" height="6.500" fill="#a5a5a5"/>
<text x="263.1" y="608" font-size="12" fill="#595959">三月份</text>
<rect x="312.1" y="600.5" width="6.500" height="6.500" fill="#ffc000"/>
<text x="320.6" y="608" font-size="12" fill="#595959">四月份</text>
<rect x="369.7" y="600.5" width="6.500" height="6.500" fill="#4472c4"/>
<text x="378.2" y="608" font-size="12" fill="#595959">五月份</text>
<rect x="427.2" y="600.5" width="6.500" height="6.500" fill="#70ad47"/>
<text x="435.8" y="608" font-size="12" fill="#595959">六月份</text>
</svg></div>
<div class="abs" style="left:710px;top:451px;width:75px;height:21px;border:2px solid #217346"></div>
<div class="abs" style="left:780px;top:467px;width:6px;height:6px;background:#217346;border:1px solid #fff;border-right:0;border-bottom:0"></div>
</div>
<svg class="abs" id="vscroll" style="left:1003px;top:190px" width="21" height="489" viewBox="1003 190 21 489">
<rect x="1006.500" y="190.500" width="14" height="14" fill="#fff" stroke="#ababab"/><path d="M1009.500 199.500h8l-4-4z" fill="#777"/>
<rect x="1006.500" y="204.500" width="14" height="440" fill="#fff" stroke="#ababab"/>
<rect x="1007" y="645" width="13" height="19" fill="#e8e8e8"/>
<rect x="1006.500" y="664.500" width="14" height="14" fill="#fff" stroke="#ababab"/><path d="M1009.500 669.500h8l-4 4z" fill="#777"/>
</svg>
<div id="sheetbar">
<div class="abs" style="left:100px;top:-1px;width:69px;height:25px;background:#fff;border-left:1px solid #ababab;border-right:1px solid #ababab;border-bottom:2px solid #217346;color:#217346;font-size:14.6px;text-align:center;line-height:25px;font-family:'Liberation Sans',sans-serif"><span style="display:inline-block;transform:scaleX(.88);transform-origin:50% 50%">Sheet1</span></div>
<svg class="abs" style="left:0;top:0" width="1024" height="27" viewBox="0 679 1024 27">
<path d="M31 687v8l-4-4zM56 687v8l4-4z" fill="#c6c6c6"/>
<circle cx="209.500" cy="691.500" r="7" fill="none" stroke="#777" stroke-width="1.200"/><path d="M205.500 691.500h8M209.500 687.500v8" stroke="#666" stroke-width="1.600"/>
<rect x="614.300" y="687.300" width="2" height="2" fill="#b4b4b4"/><rect x="614.300" y="691.500" width="2" height="2" fill="#b4b4b4"/><rect x="614.300" y="695.700" width="2" height="2" fill="#b4b4b4"/>
<rect x="631.500" y="685.500" width="14" height="14" fill="#fff" stroke="#ababab"/><path d="M641 688.500v8l-4-4z" fill="#777"/>
<rect x="645.500" y="685.500" width="315" height="14" fill="#fff" stroke="#ababab"/>
<rect x="961" y="686" width="27" height="13" fill="#e8e8e8"/>
<rect x="988.500" y="685.500" width="14" height="14" fill="#fff" stroke="#ababab"/><path d="M993 688.500v8l4-4z" fill="#777"/>
</svg>
</div>
<div id="status">
<div class="abs" style="left:7px;top:3px;font-size:12px;line-height:16px;color:#fff">就绪</div>
<div class="abs" style="left:727px;top:0;width:36px;height:22px;background:#185c37"></div>
<div class="abs" style="left:984px;top:3px;font-size:12px;line-height:16px;color:#fff;font-family:'Liberation Sans',sans-serif;letter-spacing:-0.2px">100%</div>
<svg class="abs" style="left:0;top:0" width="1024" height="22" viewBox="0 706 1024 22">
<circle cx="54" cy="713" r="2.800" fill="#fff"/><path d="M52.500 712.500h11v10h-11z" fill="none" stroke="#fff" stroke-width="1.400"/><path d="M55 717h2v1.500h-2zM58 717h2v1.500h-2zM61 717h1.500v1.500h-1.500zM55 719.500h2v1.500h-2zM58 719.500h2v1.500h-2zM61 719.500h1.500v1.500h-1.500z" fill="#fff"/><rect x="57" y="713.500" width="6" height="2" fill="#fff"/>
<path d="M738.500 710.500h13v12h-13zM738.500 714.500h13M738.500 718.500h13M742.500 710.500v12M747.500 710.500v12" fill="none" stroke="#fff" stroke-width="1"/>
<rect x="778" y="710.500" width="12.500" height="12" fill="none" stroke="#fff" stroke-width="1.200"/><rect x="781.500" y="713.500" width="5.500" height="6.500" fill="none" stroke="#fff"/><path d="M782 716h5M782 718h5" stroke="#fff" stroke-width="0.800"/>
<rect x="815.500" y="710.500" width="13" height="12" fill="none" stroke="#fff" stroke-width="1.200"/><rect x="817" y="711" width="4" height="6.500" fill="#fff"/><rect x="823" y="711" width="5" height="6.500" fill="#fff"/>
<rect x="846" y="716" width="5.500" height="2" fill="#fff"/><rect x="856" y="716.300" width="99.500" height="1" fill="#fff"/><rect x="904.500" y="711" width="3.500" height="11" fill="#fff"/>
<path d="M960 716.500h8M964 712.500v8" stroke="#fff" stroke-width="2"/>
</svg>
</div>
<div id="taskbar">
<div class="abs" style="left:0;top:0;width:1024px;height:40px;background:linear-gradient(90deg,#8c9fbc 0,#8c9fbc 58px,#a7c0dd 59px,#a7c0dd 785px,#8798b3 862px,#8193ad 1024px)"></div>
<div class="abs" style="left:0;top:0;width:1024px;height:1px;background:#2c6a4e"></div>
<div class="abs" style="left:0;top:1px;width:1024px;height:1px;background:#c9e0ec"></div>
<div class="abs" style="left:60px;top:1px;width:59px;height:39px;border:1px solid #66758c;border-radius:3px;background:linear-gradient(180deg,#e9eff6 0,#d4dfec 45%,#c3d2e4 50%,#d6e1ee 100%);box-shadow:inset 0 0 0 1px rgba(255,255,255,.7)"></div>
<svg class="abs" style="left:0;top:0" width="1024" height="40" viewBox="0 728 1024 40" font-family="Liberation Sans,sans-serif">
<defs><linearGradient id="orb" x1="0" y1="0" x2="0" y2="1"><stop offset="0" stop-color="#9db9dc"/><stop offset="0.450" stop-color="#3f78b8"/><stop offset="0.550" stop-color="#1c63b0"/><stop offset="1" stop-color="#3bb0ea"/></linearGradient></defs>
<circle cx="26.800" cy="747.800" r="17.500" fill="#2f4f7d"/><circle cx="26.800" cy="747.800" r="16.300" fill="url(#orb)"/>
<path d="M18.800 739.500c2.800-1.800 5.300-1.800 8-0.300l-1.500 7c-2.700-1.500-5.200-1.500-8 0.300z" fill="#e8662d"/><path d="M28.300 740c2.700 1.500 5.200 1.500 8-0.300l-1.500 7c-2.800 1.800-5.300 1.800-8 0.300z" fill="#97c93f"/><path d="M17 747.800c2.800-1.800 5.300-1.800 8-0.300l-1.500 7c-2.700-1.500-5.200-1.500-8 0.300z" fill="#4fb3ec"/><path d="M26.300 748.500c2.700 1.500 5.200 1.500 8-0.300l-1.500 7c-2.800 1.800-5.300 1.800-8 0.300z" fill="#fbc62d"/>
<rect x="88" y="735.500" width="15.500" height="23.500" fill="#fff" stroke="#217346" stroke-width="1"/><path d="M91 739h11M91 742.500h11M91 746h11M91 749.500h11M91 753h11M91 756.500h11M96.500 737v21" stroke="#217346" stroke-width="1.400" fill="none"/>
<path d="M73.500 735.500L92 732v30.500L73.500 759z" fill="#217346"/><path d="M78.500 741.500l8 11.500M86.500 741.500l-8 11.500" stroke="#fff" stroke-width="2.600" fill="none"/>
<path d="M865.500 751h8l-4-4.500z" fill="#fff"/>
<rect x="891" y="744" width="10" height="8.500" fill="#4d5a6c" stroke="#fff" stroke-width="1.500"/><path d="M892 756h8" stroke="#fff" stroke-width="1.600"/><path d="M896 752.500v3" stroke="#fff" stroke-width="1.500"/><path d="M887.500 741.500v3.500h4v-3.500M889.500 741v3M889.500 745v9.500h2.500" stroke="#fff" stroke-width="1.300" fill="none"/>
<path d="M910.500 746h3l4.500-4v14l-4.500-4h-3z" fill="#fff" stroke="#66758c" stroke-width="0.600"/><path d="M920 745.500c1.500 1.500 1.500 5.500 0 7M922.500 743.500c2.500 2.500 2.500 8.500 0 11" stroke="#fff" stroke-width="1.100" fill="none"/>
<text x="972" y="744" font-size="12.500" fill="#fff" text-anchor="middle">14:00</text><text x="971.500" y="762" font-size="12.500" letter-spacing="0.450" fill="#fff" text-anchor="middle">2015/1/19</text>
<defs><linearGradient id="sd" x1="0" y1="0" x2="1" y2="1"><stop offset="0" stop-color="#8a96a8"/><stop offset="0.400" stop-color="#5c687b"/><stop offset="1" stop-color="#6f7b8e"/></linearGradient></defs><rect x="1010" y="730" width="14" height="38" fill="url(#sd)"/><rect x="1009" y="730" width="1" height="38" fill="#3f4b5f"/><rect x="1010" y="730" width="1" height="38" fill="#9aa6b8"/>
</svg>
</div>
</body>
</html>
